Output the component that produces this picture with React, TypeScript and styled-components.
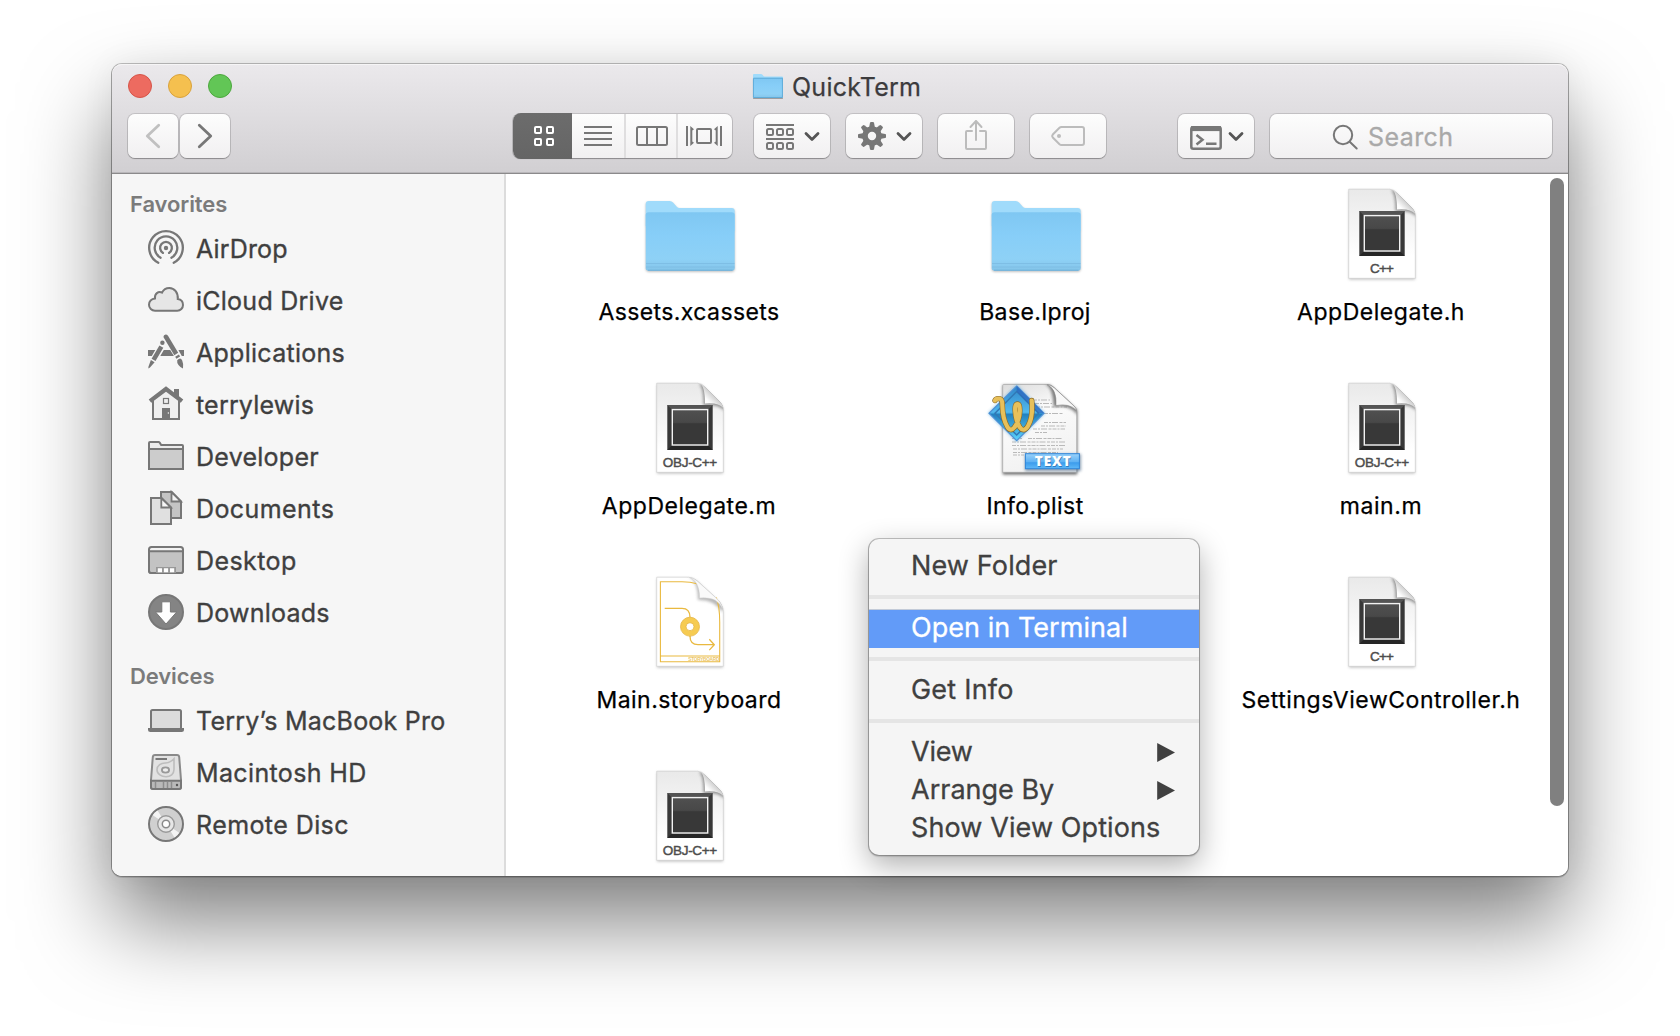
import React from "react";
import styled, { createGlobalStyle, css } from "styled-components";

const FONT = `Inter, "Liberation Sans", sans-serif`;
const G = "#777777";

const GlobalStyle = createGlobalStyle`
  * { box-sizing: border-box; }
  html, body { margin: 0; padding: 0; background: #ffffff; }
  body { font-family: ${FONT}; overflow: hidden; }
  svg { display: block; flex: none; overflow: visible; }
`;

const Desktop = styled.div`
  width: 1680px;
  height: 1036px;
  padding: 64px 112px 0;
  overflow: hidden;
  background: #fff;
`;

const Window = styled.main`
  position: relative;
  width: 1456px;
  height: 812px;
  border-radius: 10px;
  display: flex;
  flex-direction: column;
  box-shadow:
    0 0 0 1px rgba(0, 0, 0, 0.24),
    0 1px 0 1px rgba(0, 0, 0, 0.12),
    0 46px 88px rgba(0, 0, 0, 0.5),
    0 0 34px rgba(0, 0, 0, 0.06);
`;

const Header = styled.header`
  height: 110px;
  flex: none;
  display: flex;
  flex-direction: column;
  border-radius: 10px 10px 0 0;
  border-bottom: 1px solid #8b8a8b;
  background: linear-gradient(#ebe9ec, #d1cfd2);
  box-shadow: inset 0 1px 0 #f6f5f6, inset 0 -1px 0 #b9b7ba;
`;

const TitleBar = styled.div`
  height: 46px;
  padding: 0 16px;
  display: grid;
  grid-template-columns: 625px 1fr;
  align-items: center;
`;

const Lights = styled.div`
  display: flex;
  gap: 16px;
  margin-top: -2px;
`;

const Light = styled.span<{ $fill: string; $edge: string }>`
  width: 24px;
  height: 24px;
  border-radius: 50%;
  background: ${(p) => p.$fill};
  border: 1px solid ${(p) => p.$edge};
`;

const Title = styled.h1<{ $track: number }>`
  margin: 0;
  display: flex;
  align-items: center;
  gap: 9px;
  font: 400 25px/30px ${FONT};
  letter-spacing: ${(p) => p.$track}px;
  color: #3c3b3d;
  -webkit-text-stroke: 0.25px #3c3b3d;
  svg { margin-top: -2px; }
`;

const Toolbar = styled.div`
  display: flex;
  padding: 4px 16px 0;
`;

const raised = css`
  height: 44px;
  border: 0;
  padding: 0;
  border-radius: 7px;
  background: linear-gradient(#fdfdfd, #f1f0f1);
  box-shadow: 0 0 0 1px rgba(0, 0, 0, 0.13), 0 1px 1px rgba(0, 0, 0, 0.24);
  font-family: inherit;
`;

const NavGroup = styled.div`
  display: flex;
  gap: 2px;
  margin-right: 283px;
`;

const NavButton = styled.button`
  ${raised}
  width: 50px;
  display: flex;
  align-items: center;
  justify-content: center;
`;

const Segments = styled.div`
  ${raised}
  display: flex;
  width: 219px;
  margin-right: 22px;
`;

const Segment = styled.button<{ $w: number; $on?: boolean; $line?: boolean }>`
  width: ${(p) => p.$w}px;
  height: ${(p) => (p.$on ? 46 : 44)}px;
  margin: ${(p) => (p.$on ? "-1px 0" : "0")};
  padding: ${(p) => (p.$on ? "0 0 0 3px" : "0")};
  border: 0;
  border-right: ${(p) => (p.$line ? "2px solid #dfdedf" : "0")};
  border-radius: ${(p) => (p.$on ? "8px 0 0 8px" : "0")};
  background: ${(p) => (p.$on ? "linear-gradient(#6c6c6c, #656565)" : "none")};
  display: flex;
  align-items: center;
  justify-content: center;
`;

const ToolButton = styled.button<{ $gap?: number; $menu?: boolean }>`
  ${raised}
  width: 76px;
  margin-right: ${(p) => p.$gap ?? 16}px;
  padding: ${(p) => (p.$menu ? "0 10px 0 12px" : "0")};
  display: flex;
  align-items: center;
  justify-content: ${(p) => (p.$menu ? "space-between" : "center")};
`;

const SearchField = styled.div`
  ${raised}
  width: 282px;
  padding: 1px 0 0 63px;
  display: flex;
  align-items: center;
  gap: 10px;
  font: 400 25px/30px ${FONT};
  letter-spacing: 0.42px;
  color: #a9a9a9;
  -webkit-text-stroke: 0.3px #a9a9a9;
`;

const Body = styled.div`
  flex: 1;
  min-height: 0;
  display: flex;
  border-radius: 0 0 10px 10px;
  overflow: hidden;
  background: #fff;
`;

const Sidebar = styled.nav`
  width: 394px;
  flex: none;
  padding-top: 16px;
  background: #f6f6f6;
  border-right: 2px solid #dcdcdc;
`;

const SectionTitle = styled.h2`
  margin: 0 0 5px;
  padding-left: 18px;
  font: 600 22px/28px ${FONT};
  letter-spacing: -0.1px;
  color: #7b7b7b;
`;

const List = styled.ul`
  list-style: none;
  margin: 0 0 23px;
  padding: 0;
`;

const Place = styled.li<{ $track: number }>`
  height: 52px;
  padding-left: 36px;
  display: flex;
  align-items: center;
  gap: 12px;
  font: 400 25px/30px ${FONT};
  letter-spacing: ${(p) => p.$track}px;
  color: #3f3f3f;
  -webkit-text-stroke: 0.35px #3f3f3f;
  svg { margin-top: -2px; }
`;

const Files = styled.section`
  position: relative;
  flex: 1;
  padding: 12px 0 0 11px;
  display: grid;
  grid-template-columns: repeat(3, 346px);
  grid-auto-rows: 194px;
  overflow: hidden;
`;

const FileCell = styled.figure`
  margin: 0;
  display: flex;
  flex-direction: column;
  align-items: center;
`;

const FileName = styled.figcaption<{ $track: number }>`
  margin-top: 15px;
  padding-right: 2px;
  font: 400 23px/30px ${FONT};
  letter-spacing: ${(p) => p.$track}px;
  white-space: nowrap;
  color: #000;
  -webkit-text-stroke: 0.25px #000;
`;

const Scroller = styled.div`
  position: absolute;
  top: 4px;
  right: 4px;
  width: 14px;
  height: 628px;
  border-radius: 7px;
  background: #808080;
`;

const ContextMenu = styled.div`
  position: absolute;
  left: 757px;
  top: 475px;
  width: 330px;
  padding: 8px 0;
  border-radius: 10px;
  background: #f5f5f5;
  box-shadow:
    0 0 0 1px rgba(0, 0, 0, 0.22),
    0 1px 1px 1px rgba(0, 0, 0, 0.12),
    0 10px 30px rgba(0, 0, 0, 0.32);
`;

const MenuItem = styled.div<{ $track: number; $active?: boolean }>`
  height: 38px;
  padding: 0 24px 0 42px;
  display: flex;
  align-items: center;
  justify-content: space-between;
  font: 400 27px/34px ${FONT};
  letter-spacing: ${(p) => p.$track}px;
  white-space: nowrap;
  color: #404040;
  -webkit-text-stroke: 0.3px currentColor;
  ${(p) =>
    p.$active &&
    css`
      color: #fff;
      background: linear-gradient(#c3cbd8 1px, #629bf8 1px);
      box-shadow: 0 1px 0 #629bf8;
    `}
`;

const MenuLine = styled.div`
  height: 4px;
  margin: 10px 0;
  background: #e5e5e5;
`;

/* ---------- toolbar icons ---------- */

const Chevron = ({ dir, color }: { dir: "left" | "right"; color: string }) => (
  <svg width="14" height="24" fill="none" stroke={color} strokeWidth="2.800" strokeLinecap="round" strokeLinejoin="round">
    <path d={dir === "left" ? "M12.7 1.2 1.3 12l11.4 10.8" : "M1.3 1.2 12.7 12 1.3 22.8"} />
  </svg>
);

const DownChevron = () => (
  <svg width="16" height="9" fill="none" stroke="#555" strokeWidth="2.800" strokeLinecap="round" strokeLinejoin="round">
    <path d="M2 1.500 8 7.500l6-6" />
  </svg>
);

const GridIcon = () => (
  <svg width="20" height="20" fill="none" stroke="#fff" strokeWidth="2">
    {[[1, 1], [13, 1], [1, 13], [13, 13]].map(([x, y]) => (
      <rect key={`${x}-${y}`} x={x} y={y} width="6" height="6" rx="1" />
    ))}
  </svg>
);

const ListIcon = () => (
  <svg width="28" height="20" stroke={G} strokeWidth="2">
    <path d="M0 1h28M0 7h28M0 13h28M0 19h28" />
  </svg>
);

const ColumnsIcon = () => (
  <svg width="32" height="20" fill="none" stroke={G} strokeWidth="2" style={{ marginLeft: 2 }}>
    <rect x="1" y="1" width="30" height="18" rx="1.500" />
    <path d="M11 1v18M21 1v18" />
  </svg>
);

const CoverFlowIcon = () => (
  <svg width="36" height="20" fill="none" stroke={G} strokeWidth="2" style={{ marginRight: 2 }}>
    <rect x="11" y="3" width="14" height="14" rx="1" />
    <path d="M1 0v20M35 0v20" />
    <path d="M4.300 0 8 3.200 6.300 4.500v11L8 16.800 4.300 20zM31.700 0 28 3.200l1.700 1.300v11L28 16.800l3.700 3.200z" fill={G} stroke="none" />
  </svg>
);

const ArrangeIcon = () => (
  <svg width="28" height="26" fill="none" stroke={G} strokeWidth="2" style={{ marginTop: 2 }}>
    <path d="M0 1h28M0 15h28" />
    {[1, 11, 21].map((x) => (
      <React.Fragment key={x}>
        <rect x={x} y="5" width="6" height="6" rx="1.500" />
        <rect x={x} y="19" width="6" height="6" rx="1.500" />
      </React.Fragment>
    ))}
  </svg>
);

const GearIcon = () => (
  <svg width="28" height="28" viewBox="-14 -14 28 28">
    {[0, 45, 90, 135, 180, 225, 270, 315].map((a) => (
      <path key={a} d="M-3-8-2-13.200q.2-.8 1-.8h2q.8 0 1 .8L3-8z" transform={`rotate(${a})`} fill={G} />
    ))}
    <circle r="7" fill="none" stroke={G} strokeWidth="5.600" />
  </svg>
);

const ShareIcon = () => (
  <svg width="22" height="32" fill="none" stroke="#bcbcbc" strokeWidth="2" strokeLinecap="round" strokeLinejoin="round" style={{ marginTop: -2 }}>
    <path d="M7 12H2a1 1 0 0 0-1 1v16a1 1 0 0 0 1 1h18a1 1 0 0 0 1-1V13a1 1 0 0 0-1-1h-5M11 21V2M5.500 8 11 2l5.500 6" />
  </svg>
);

const TagIcon = () => (
  <svg width="34" height="20" fill="none" stroke="#bcbcbc" strokeWidth="2">
    <path d="M10.500 1H31q2 0 2 2v14q0 2-2 2H10.500q-1.200 0-2-.8L1.800 11.500q-1.300-1.500 0-3l6.700-6.700q.8-.8 2-.8z" />
    <circle cx="8" cy="10" r="2" fill="#bcbcbc" stroke="none" />
  </svg>
);

const TerminalIcon = () => (
  <svg width="32" height="24" fill="none" stroke={G} strokeWidth="2.500" style={{ marginTop: 4 }}>
    <rect x="1.300" y="1.300" width="29.400" height="21.400" rx="2" />
    <path d="M1 2.600h30" strokeWidth="5" strokeLinecap="butt" />
    <path d="M6.500 9l6 4.700-6 4.700M16 17.700h10.500" strokeWidth="2.500" />
  </svg>
);

const SearchIcon = () => (
  <svg width="25" height="24" fill="none" stroke={G} strokeWidth="2" strokeLinecap="round">
    <circle cx="10" cy="10" r="9.200" />
    <path d="M16.700 16.700 23.700 23.500" />
  </svg>
);

/* ---------- sidebar icons ---------- */

const Glyph = ({ children }: { children: React.ReactNode }) => (
  <svg width="36" height="36" fill="none" stroke={G} strokeWidth="2">{children}</svg>
);

const AirDrop = () => (
  <Glyph>
    <g strokeLinecap="round" strokeWidth="2.300">
      <path d="M10.300 32.800a16.800 16.800 0 1 1 15.400 0" />
      <path d="M12.600 27.700a11.300 11.300 0 1 1 10.800 0" />
      <path d="M15 22.900a5.900 5.900 0 1 1 6 0" />
    </g>
    <circle cx="18" cy="18" r="2.200" fill={G} stroke="none" />
  </Glyph>
);

const Cloud = () => (
  <Glyph>
    <path fill="#e6e6e6" d="M7 28.700h22.300c3.200 0 5.700-2.600 5.700-5.700 0-3.200-2.300-5.500-5.200-5.900C30.300 10.800 26.500 6 21.300 6c-3.300 0-5.900 1.800-7.300 4.600-3.700-1.700-7.600 1.200-7 5.800-3.600.5-6 3.100-6 6.300 0 3.300 2.700 6 6 6z" />
  </Glyph>
);

const Apps = () => (
  <Glyph>
    <g fill={G} stroke="none">
      <path d="M0 16h7.200l-3.400 6H0zM15.800 16h6.400l3.700 6H12.300zM30.400 16H36v6h-2.200z" />
      <circle cx="14.400" cy="8.800" r="2.200" />
      <path d="M11.400 11.400l3.900 2.300L7.500 27l-3.900-2.300zM2.900 26l3.700 2.200-4.600 5.300-1.700 1 .2-1.900z" />
      <path d="M15.400 2.900Q15.600.4 17.700.4q1.400 0 2.300 1.400L30.200 18.800l-3.900 2.400zM27.200 22.700l3.700-2.200 1.200 2-3.700 2.200zM29.200 26.200q3.300-3.400 5 .2 1.600 3.500.8 8.100-2.800-1.200-4.500-3.600-1.700-2.400-1.300-4.700z" />
    </g>
  </Glyph>
);

const Home = () => (
  <Glyph>
    <path fill="#efefef" d="M5 13.500V33h26V13.500L18 3.500z" />
    <path fill={G} stroke="none" d="M26 3h5v9l-5-4z" />
    <path d="M2 15.200 18 3l16 12.200" strokeWidth="4.200" />
    <rect x="15.500" y="12.500" width="5" height="5" strokeWidth="1.200" />
    <path fill={G} stroke="none" d="M14 22h8v12h-8z" />
    <path stroke="#ddd" strokeWidth="1" d="M20.300 26v2" />
  </Glyph>
);

const FolderGlyph = () => (
  <Glyph>
    <path fill="#ececec" d="M1 31V5q0-1 1-1h8.500q.8 0 1.200.6L13.200 7H34q1 0 1 1v23z" />
    <path fill="#cccccc" d="M1 11h34v19q0 1-1 1H2q-1 0-1-1z" />
  </Glyph>
);

const Docs = () => (
  <Glyph>
    <path fill="#c4c4c4" d="M13 2h10.700L33 11.500V28H13z" />
    <path fill="#f3f3f3" strokeWidth="1.800" d="M23.500 2v9.500H33z" />
    <path fill="#e0e0e0" d="M3 8h10.500L23 17.500V34H3z" />
    <path fill="#f6f6f6" strokeWidth="1.800" d="M13.300 8v9.500H23z" />
  </Glyph>
);

const DesktopGlyph = () => (
  <Glyph>
    <rect x="1" y="5" width="34" height="26" rx="2.500" fill="#f2f2f2" />
    <path fill="#c3c3c3" d="M1 9.200h34V28.500q0 2.500-2.500 2.500h-29Q1 31 1 28.500z" />
    <path fill="#989898" stroke="none" d="M8 25h20v6H8z" />
    <path fill="#fff" stroke="none" d="M9.800 26.200h4.200v4H9.800zM15.900 26.200h4.200v4h-4.200zM22 26.200h4.200v4H22z" />
  </Glyph>
);

const Downloads = () => (
  <Glyph>
    <circle cx="18" cy="18" r="17" fill="#848484" />
    <path fill="#fff" strokeWidth="1" d="M13.800 7.800h8.600V18h6.300L18 30 7.500 18h6.300z" />
  </Glyph>
);

const Laptop = () => (
  <Glyph>
    <rect x="3" y="8" width="30" height="19" rx="1.500" fill="#dcdcdc" />
    <path fill={G} stroke="none" d="M0 26h36v1.500Q36 30 33.500 30h-31Q0 30 0 27.500z" />
  </Glyph>
);

const HardDisk = () => (
  <Glyph>
    <path fill="#e2e2e2" stroke="#8a8a8a" d="M7 1h22q2 0 2.200 2L33 26v7q0 2-2 2H5q-2 0-2-2v-7L4.800 3Q5 1 7 1z" />
    <path fill="#b9b9b9" stroke={G} d="M3 26.700h30V33q0 2-2 2H5q-2 0-2-2z" />
    <path d="M7.500 5H19" strokeWidth="2" />
    <path stroke="#bdbdbd" strokeWidth="1.600" d="M26 4.800v10.800c0 4.400-3.500 7.200-8 7.200s-9-2.600-9-7c0-4.300 4.200-7 8.500-6.800 3.500 0 6-1.700 8.500-4.200z" />
    <ellipse cx="17.500" cy="16" rx="3.600" ry="2.600" stroke="#999" strokeWidth="1.800" fill="#eee" />
    <path stroke="#8c8c8c" strokeWidth="1.500" d="M7.500 28v6M15.500 28v6M19.500 28v6M23.500 28v6" />
    <circle cx="29" cy="31" r="1.200" fill="#555" stroke="none" />
  </Glyph>
);

const Disc = () => (
  <Glyph>
    <circle cx="18" cy="18" r="17" fill="#d0d0d0" />
    <path fill="#f4f4f4" stroke="none" d="M18 18 4.800 9.300Q6.500 6.500 9.500 4.600zM18 18l13.200 8.700q-1.700 2.800-4.700 4.700z" />
    <circle cx="18" cy="18" r="8.300" fill="#e6e6e6" stroke="#9a9a9a" strokeWidth="1.400" />
    <circle cx="18" cy="18" r="3.700" fill="#fff" stroke="#8a8a8a" strokeWidth="1.500" />
  </Glyph>
);

/* ---------- file icons ---------- */

const FolderShape = ({ id }: { id: string }) => (
  <>
    <defs>
      <linearGradient id={id} x1="0" y1="0" x2="0" y2="1">
        <stop offset="0" stopColor="#7fc7f2" />
        <stop offset="0.4" stopColor="#87cef8" />
        <stop offset="0.8" stopColor="#8ed1f6" />
        <stop offset="1" stopColor="#84c4e9" />
      </linearGradient>
    </defs>
    <path fill="#a0dbfb" d="M3.700 40V18q0-3 3-3h21q2 0 3.300 1.500l4 4.500q1 1 2.500 1h52.200q3 0 3 3v20z" />
    <path fill={`url(#${id})`} d="M3.700 29q0-2.800 2.800-2.800h83.400q2.800 0 2.800 2.800v53q0 2.700-2.800 2.700H6.500q-2.800 0-2.800-2.700z" />
  </>
);

const FolderFile = ({ id }: { id: string }) => (
  <svg width="96" height="96" style={{ filter: "drop-shadow(0 1px 1px rgba(0,0,0,.25))" }}>
    <FolderShape id={id} />
    <path stroke="#7ab9e0" strokeWidth="1" opacity="0.700" d="M4 77.500h88.500M4 81h88.500" />
    <path stroke="#6eb0d8" strokeWidth="1" d="M6 84.200h84.500" />
  </svg>
);

const TitleFolder = () => (
  <svg width="30" height="24" viewBox="3.700 15 89 70" preserveAspectRatio="none" style={{ filter: "drop-shadow(0 1px 0.5px rgba(0,0,0,.3))" }}>
    <FolderShape id="title-folder" />
    <path fill="none" stroke="#58a5d3" strokeWidth="3" d="M5 28v53q0 2.500 2 2.500h82q2 0 2-2.500V28M5 27.500h87" opacity="0.800" />
  </svg>
);

const SourceFile = ({ id, kind }: { id: string; kind: "C++" | "OBJ-C++" }) => (
  <svg width="96" height="96">
    <defs>
      <linearGradient id={`${id}p`} x1="0" y1="0" x2="0" y2="1">
        <stop offset="0" stopColor="#e9e9e9" />
        <stop offset="0.75" stopColor="#ffffff" />
      </linearGradient>
      <linearGradient id={`${id}b`} x1="0" y1="0" x2="0" y2="1">
        <stop offset="0" stopColor="#505050" />
        <stop offset="0.36" stopColor="#484848" />
        <stop offset="0.4" stopColor="#383838" />
        <stop offset="1" stopColor="#383838" />
      </linearGradient>
      <linearGradient id={`${id}f`} x1="0.1" y1="0.9" x2="0.55" y2="0.45">
        <stop offset="0" stopColor="#ffffff" />
        <stop offset="0.5" stopColor="#fdfdfd" />
        <stop offset="1" stopColor="#cfcfcf" />
      </linearGradient>
      <filter id={`${id}s`} x="-30%" y="-30%" width="160%" height="160%">
        <feGaussianBlur stdDeviation="1.700" />
      </filter>
      <clipPath id={`${id}c`}>
        <path d="M14.500 3.200h41q4 .3 7.500 4L78 22q3.500 3.500 3.500 8v62.800h-67z" />
      </clipPath>
    </defs>
    <path d="M15 4.500h41q4 .3 7 4L77.500 23q3.500 3.500 3.500 8v62.500H15z" fill="#888" filter={`url(#${id}s)`} opacity="0.550" />
    <path d="M14.700 3.200h41q4 .3 7.500 4L78 22q3.300 3.500 3.300 8v62.300H14.700z" fill={`url(#${id}p)`} stroke="#cfcfcf" strokeWidth="0.700" />
    <path d="M25.300 25h45.400v45H25.300z" fill="#383838" />
    <path d="M25.300 25h45.400l-4 4H29.300z" fill="#545454" />
    <path d="M25.300 70h45.400l-4-4H29.300z" fill="#262626" />
    <rect x="30.300" y="29.600" width="35.400" height="35.400" fill={`url(#${id}b)`} stroke="#f2f2f2" strokeWidth="1.400" />
    <g clipPath={`url(#${id}c)`}>
      <path d="M57 4q4.500 3 4.500 21.500 16-1.500 20 5L84 20 66 4z" fill="#555" filter={`url(#${id}s)`} opacity="0.600" />
    </g>
    <path d="M57.500 3.300q5.500 2.500 5.500 20.200 13.500-1.300 18.300 4.500-.6-3.500-3.300-6L63 7.200Q60.500 4.300 57.500 3.300z" fill={`url(#${id}f)`} />
    <text x="48" y="86.600" textAnchor="middle" textLength={kind === "C++" ? 24 : 54.5} fontFamily="Liberation Sans, sans-serif" fontSize="13.500" fontWeight="400" fill="#4d4d4d" stroke="#4d4d4d" strokeWidth="0.450">
      {kind}
    </text>
  </svg>
);

const StoryboardFile = () => (
  <svg width="96" height="96">
    <defs>
      <filter id="sb-s" x="-30%" y="-30%" width="160%" height="160%">
        <feGaussianBlur stdDeviation="1.800" />
      </filter>
      <clipPath id="sb-c">
        <path d="M14.500 3.200h32q5 .3 9 4L73 23q8.500 7 8.500 15v54.800h-67z" />
      </clipPath>
    </defs>
    <path d="M15 4.500h32q5 .3 9 4L73 24.500q8 7 8 15v54H15z" fill="#888" filter="url(#sb-s)" opacity="0.550" />
    <path d="M14.700 3.200h32q5 .3 9 4L73 23q8.300 7 8.300 15v54.300H14.700z" fill="#fff" stroke="#d2d2d2" strokeWidth="0.700" />
    <g clipPath="url(#sb-c)">
      <path d="M46 2q10 4 10 24 16-1 24 12L86 20 66 2z" fill="#888" filter="url(#sb-s)" opacity="0.600" />
    </g>
    <g fill="none" stroke="#e9b93f" strokeWidth="1.100">
      <path d="M56 10q-8-2.300-16-2.300H18.400v80h59.300V48q0-16-3.500-24.500M18.400 82h59.300" />
      <path d="M22.700 34.300H40q8 0 8 9M48 62q0 8.700 8 8.700h16M67.300 65.300l5 5.400-5 5.400" strokeWidth="1.300" />
    </g>
    <circle cx="48" cy="52.700" r="6.700" fill="#fff" stroke="#f6cb51" strokeWidth="5.400" />
    <circle cx="48" cy="52.700" r="9.500" fill="none" stroke="#e5b33c" strokeWidth="0.800" />
    <circle cx="48" cy="52.700" r="4" fill="none" stroke="#e5b33c" strokeWidth="0.800" />
    <path d="M47.500 3.400Q57.500 7 57.700 24q10-.8 16 2.500 5 3.500 7 8-1.500-6.500-7.700-11.500L55.500 7.200Q52 4 47.500 3.400z" fill="#fafafa" stroke="#d5d5d5" strokeWidth="0.500" />
    <text x="46.300" y="86.700" textLength="31" fontFamily="Liberation Sans, sans-serif" fontSize="4.700" fontWeight="700" fill="#ebc66a">STORYBOARD</text>
  </svg>
);

const PlistFile = () => (
  <svg width="96" height="96">
    <defs>
      <linearGradient id="pl-page" x1="0" y1="0" x2="0.300" y2="1">
        <stop offset="0" stopColor="#dcdcdc" />
        <stop offset="0.400" stopColor="#fbfbfb" />
        <stop offset="1" stopColor="#f2f2f2" />
      </linearGradient>
      <linearGradient id="pl-dia" x1="0" y1="0" x2="0" y2="1">
        <stop offset="0" stopColor="#2f86c9" />
        <stop offset="0.480" stopColor="#52b9ee" />
        <stop offset="0.520" stopColor="#2382c0" />
        <stop offset="1" stopColor="#5cd4fb" />
      </linearGradient>
      <linearGradient id="pl-band" x1="0" y1="0" x2="0" y2="1">
        <stop offset="0" stopColor="#9ad2fa" />
        <stop offset="0.550" stopColor="#5eb1f3" />
        <stop offset="0.600" stopColor="#3c9cec" />
        <stop offset="1" stopColor="#5fb9f8" />
      </linearGradient>
      <filter id="pl-s" x="-30%" y="-30%" width="160%" height="160%">
        <feGaussianBlur stdDeviation="1.500" />
      </filter>
      <clipPath id="pl-c">
        <path d="M14.700 4.500H60q3 0 5.500 2.500L86 26q2.700 2.500 2.700 6v60.300h-74z" />
      </clipPath>
    </defs>
    <path d="M14.700 5H62l27.200 25v64.500H14.700z" fill="#444" filter="url(#pl-s)" opacity="0.800" />
    <path d="M14.700 5.500q0-1 1-1H60q3 0 5.500 2.500L86 26q2.700 2.500 2.700 6v60.300h-74z" fill="url(#pl-page)" stroke="#aaa" strokeWidth="0.700" />
    <g stroke="#b9b9b9" strokeWidth="1" strokeDasharray="4 1 2 1 6 1.500 3 1">
      <path d="M45 20h17M47 23.500h17M48 27h31M56 33.500h19M56 42.500h22M53 46h25M45 49h32M47 52.500h12M24 58.500h10M40 58.500h34M24 62h53M24 65.500h54M25 69h50M25 72.500h45M25 75h11" />
    </g>
    <g clipPath="url(#pl-c)">
      <path d="M57 4q8 3 8.500 23 16-3 24 8L90 24 68 2z" fill="#555" filter="url(#pl-s)" opacity="0.750" />
    </g>
    <path d="M59 4.600Q69 9 68 25.500q14-2.500 20.500 5-.3-2.500-2.500-4.500L66.500 8Q63 4.800 59 4.600z" fill="#f8f8f8" stroke="#8a8a8a" strokeWidth="0.600" />
    <path d="M28.700 4.500 57 33.300 28.700 62 0 33.300z" fill="#49a0d8" filter="url(#pl-s)" opacity="0.600" />
    <path d="M28.700 6 56 33.300 28.700 60.700 1 33.300z" fill="url(#pl-dia)" stroke="#4c8fd6" strokeWidth="1.200" />
    <path d="M28.700 11.500 50.500 33.300 28.700 55 7 33.300z" fill="none" stroke="#3178b5" strokeWidth="1.500" />
    <path d="M28.700 6 56 33.300 50.500 33.300 28.700 11.500z" fill="#2c65bd" opacity="0.700" />
    <g fill="none" strokeLinecap="round" strokeLinejoin="round">
      {[["#8a6a28", 5.4], ["#e8c05a", 4.2]].map(([c, w]) => (
        <path key={c} stroke={c as string} strokeWidth={w as number} d="M7 20.500q1-2.500 5-1.700 2.300.7 2.300 6 .3 14 5 22 3.200 5.500 7.200.5 5-7 5.300-16 .2-7.300-2.300-7.300-2.800 0-2.300 7 .6 10 4.600 16.300 4 5.500 8.200-1.300 5.300-9 3.700-25.500" />
      ))}
    </g>
    <rect x="37" y="74" width="56" height="17" fill="#3c5f80" filter="url(#pl-s)" opacity="0.600" />
    <rect x="37.400" y="73.700" width="54" height="15" fill="url(#pl-band)" stroke="#2f86d9" strokeWidth="1" />
    <text x="47.500" y="87" textLength="36" fontFamily="Open Sans, sans-serif" fontSize="13.500" fontWeight="800" fill="#1d5f9e" opacity="0.600">TEXT</text>
    <text x="46.700" y="86" textLength="36" fontFamily="Open Sans, sans-serif" fontSize="13.500" fontWeight="800" fill="#fff">TEXT</text>
  </svg>
);

/* ---------- data ---------- */

const favorites: [string, React.FC, number][] = [
  ["AirDrop", AirDrop, 0.16],
  ["iCloud Drive", Cloud, 0.25],
  ["Applications", Apps, 0.28],
  ["terrylewis", Home, 0.19],
  ["Developer", FolderGlyph, 0.26],
  ["Documents", Docs, 0.42],
  ["Desktop", DesktopGlyph, 0.42],
  ["Downloads", Downloads, 0.24],
];

const devices: [string, React.FC, number][] = [
  ["Terry’s MacBook Pro", Laptop, 0.22],
  ["Macintosh HD", HardDisk, 0.36],
  ["Remote Disc", Disc, 0.42],
];

const files: { name?: string; icon?: React.ReactNode; track?: number }[] = [
  { name: "Assets.xcassets", icon: <FolderFile id="f1" />, track: 0.41 },
  { name: "Base.lproj", icon: <FolderFile id="f2" />, track: 0.43 },
  { name: "AppDelegate.h", icon: <SourceFile id="s1" kind="C++" />, track: 0.54 },
  { name: "AppDelegate.m", icon: <SourceFile id="s2" kind="OBJ-C++" />, track: 0.52 },
  { name: "Info.plist", icon: <PlistFile />, track: 0.43 },
  { name: "main.m", icon: <SourceFile id="s3" kind="OBJ-C++" />, track: 0.6 },
  { name: "Main.storyboard", icon: <StoryboardFile />, track: 0.46 },
  {},
  { name: "SettingsViewController.h", icon: <SourceFile id="s4" kind="C++" />, track: 0.54 },
  { icon: <SourceFile id="s5" kind="OBJ-C++" /> },
];

const Arrow = () => (
  <svg width="18" height="19" fill="#404040">
    <path d="M.2 0 18 9.500.2 19z" />
  </svg>
);

const Places = ({ items }: { items: [string, React.FC, number][] }) => (
  <List>
    {items.map(([label, Icon, track]) => (
      <Place key={label} $track={track}>
        <Icon />
        {label}
      </Place>
    ))}
  </List>
);

export default function App() {
  return (
    <Desktop>
      <GlobalStyle />
      <Window>
        <Header>
          <TitleBar>
            <Lights>
              <Light $fill="#ed6b60" $edge="#d65448" />
              <Light $fill="#f5c04f" $edge="#d9a23c" />
              <Light $fill="#62c656" $edge="#4ca73d" />
            </Lights>
            <Title $track={0.25}>
              <TitleFolder />
              QuickTerm
            </Title>
          </TitleBar>
          <Toolbar>
            <NavGroup>
              <NavButton aria-label="Back"><Chevron dir="left" color="#c0c0c0" /></NavButton>
              <NavButton aria-label="Forward"><Chevron dir="right" color="#777777" /></NavButton>
            </NavGroup>
            <Segments>
              <Segment $w={59} $on aria-label="Icons"><GridIcon /></Segment>
              <Segment $w={54} $line aria-label="List"><ListIcon /></Segment>
              <Segment $w={52} $line aria-label="Columns"><ColumnsIcon /></Segment>
              <Segment $w={54} aria-label="Cover Flow"><CoverFlowIcon /></Segment>
            </Segments>
            <ToolButton $menu aria-label="Arrange"><ArrangeIcon /><DownChevron /></ToolButton>
            <ToolButton $menu aria-label="Action"><GearIcon /><DownChevron /></ToolButton>
            <ToolButton aria-label="Share"><ShareIcon /></ToolButton>
            <ToolButton $gap={72} aria-label="Tags"><TagIcon /></ToolButton>
            <ToolButton $menu aria-label="Terminal"><TerminalIcon /><DownChevron /></ToolButton>
            <SearchField><SearchIcon />Search</SearchField>
          </Toolbar>
        </Header>
        <Body>
          <Sidebar>
            <SectionTitle>Favorites</SectionTitle>
            <Places items={favorites} />
            <SectionTitle>Devices</SectionTitle>
            <Places items={devices} />
          </Sidebar>
          <Files>
            {files.map((f, i) => (
              <FileCell key={i}>
                {f.icon}
                {f.name && <FileName $track={f.track ?? 0}>{f.name}</FileName>}
              </FileCell>
            ))}
            <Scroller />
          </Files>
        </Body>
        <ContextMenu role="menu">
          <MenuItem $track={0.13}>New Folder</MenuItem>
          <MenuLine />
          <MenuItem $track={0.05} $active>Open in Terminal</MenuItem>
          <MenuLine />
          <MenuItem $track={0.22}>Get Info</MenuItem>
          <MenuLine />
          <MenuItem $track={-0.2}>View<Arrow /></MenuItem>
          <MenuItem $track={0}>Arrange By<Arrow /></MenuItem>
          <MenuItem $track={0.1}>Show View Options</MenuItem>
        </ContextMenu>
      </Window>
    </Desktop>
  );
}
